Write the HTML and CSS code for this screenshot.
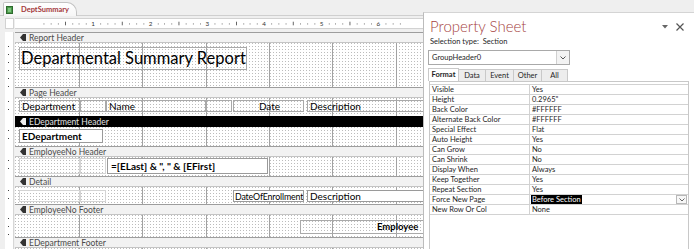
FILE: index.html
```html
<!DOCTYPE html>
<html>
<head>
<meta charset="utf-8">
<title>DeptSummary</title>
<link rel="stylesheet" href="styles.css">
</head>
<body>
<div class="app">
  <div class="designer">
    <div class="tabbar">
      <div class="tab">
        <svg class="ticon" width="7" height="8" viewBox="0 0 7 8"><rect x="0.5" y="0.5" width="6" height="7" fill="#4c9a4c" stroke="#2d6b2d"/><rect x="2" y="2" width="3" height="4" fill="#7cc47c"/></svg>
        <span>DeptSummary</span>
      </div>
    </div>
    <div class="rulerrow">
      <div class="corner"></div>
      <svg class="hruler" width="408" height="10" viewBox="0 0 408 10">
        <g fill="#555">
          <rect x="9" y="5" width="1" height="1"/><rect x="17" y="5" width="1" height="1"/><rect x="25" y="5" width="1" height="1"/><rect x="33" y="3" width="1" height="4"/><rect x="41" y="5" width="1" height="1"/><rect x="48" y="5" width="1" height="1"/><rect x="56" y="5" width="1" height="1"/>
          <rect x="72" y="5" width="1" height="1"/><rect x="80" y="5" width="1" height="1"/><rect x="88" y="5" width="1" height="1"/><rect x="96" y="3" width="1" height="4"/><rect x="104" y="5" width="1" height="1"/><rect x="112" y="5" width="1" height="1"/><rect x="120" y="5" width="1" height="1"/>
          <rect x="136" y="5" width="1" height="1"/><rect x="143" y="5" width="1" height="1"/><rect x="151" y="5" width="1" height="1"/><rect x="159" y="3" width="1" height="4"/><rect x="167" y="5" width="1" height="1"/><rect x="175" y="5" width="1" height="1"/><rect x="183" y="5" width="1" height="1"/>
          <rect x="199" y="5" width="1" height="1"/><rect x="207" y="5" width="1" height="1"/><rect x="215" y="5" width="1" height="1"/><rect x="223" y="3" width="1" height="4"/><rect x="231" y="5" width="1" height="1"/><rect x="238" y="5" width="1" height="1"/><rect x="246" y="5" width="1" height="1"/>
          <rect x="262" y="5" width="1" height="1"/><rect x="270" y="5" width="1" height="1"/><rect x="278" y="5" width="1" height="1"/><rect x="286" y="3" width="1" height="4"/><rect x="294" y="5" width="1" height="1"/><rect x="302" y="5" width="1" height="1"/><rect x="310" y="5" width="1" height="1"/>
          <rect x="326" y="5" width="1" height="1"/><rect x="333" y="5" width="1" height="1"/><rect x="341" y="5" width="1" height="1"/><rect x="349" y="3" width="1" height="4"/><rect x="357" y="5" width="1" height="1"/><rect x="365" y="5" width="1" height="1"/><rect x="373" y="5" width="1" height="1"/>
          <rect x="389" y="5" width="1" height="1"/><rect x="397" y="5" width="1" height="1"/><rect x="405" y="5" width="1" height="1"/>
        </g>
        <g class="rnum" fill="#333" text-anchor="middle">
          <text x="64" y="8">1</text><text x="128" y="8">2</text><text x="191" y="8">3</text><text x="254" y="8">4</text><text x="318" y="8">5</text><text x="381" y="8">6</text>
        </g>
      </svg>
    </div>

    <div class="sec"><div class="vr"></div><div class="bar"><svg class="arr" width="6" height="7" viewBox="0 0 6 7"><polygon points="0,3.5 3,0 6,0 6,7 3,7"/></svg>Report Header</div></div>
    <div class="sec"><div class="vr dots"></div><div class="body h-rh">
      <div class="ctl lbl title">Departmental Summary Report</div>
    </div></div>

    <div class="sec"><div class="vr"></div><div class="bar"><svg class="arr" width="6" height="7" viewBox="0 0 6 7"><polygon points="0,3.5 3,0 6,0 6,7 3,7"/></svg>Page Header</div></div>
    <div class="sec"><div class="vr dots"></div><div class="body h-ph">
      <div class="ctl lbl ph c-dept">Department</div>
      <div class="ctl lbl ph c-b1"></div>
      <div class="ctl lbl ph c-name">Name</div>
      <div class="ctl lbl ph c-b2"></div>
      <div class="ctl lbl ph c-date">Date</div>
      <div class="ctl lbl ph c-desc">Description</div>
    </div></div>

    <div class="sec"><div class="vr"></div><div class="bar dark"><svg class="arr" width="6" height="7" viewBox="0 0 6 7"><polygon points="0,3.5 3,0 6,0 6,7 3,7"/></svg>EDepartment Header</div></div>
    <div class="sec"><div class="vr dots"></div><div class="body h-edh">
      <div class="ctl txt bold c-edept">EDepartment</div>
    </div></div>

    <div class="sec"><div class="vr"></div><div class="bar"><svg class="arr" width="6" height="7" viewBox="0 0 6 7"><polygon points="0,3.5 3,0 6,0 6,7 3,7"/></svg>EmployeeNo Header</div></div>
    <div class="sec"><div class="vr dots"></div><div class="body h-enh">
      <div class="ctl faint en c-f1"></div>
      <div class="ctl faint en c-f2"></div>
      <div class="ctl txt bold c-elast">=[ELast] &amp; ", " &amp; [EFirst]</div>
    </div></div>

    <div class="sec"><div class="vr"></div><div class="bar"><svg class="arr" width="6" height="7" viewBox="0 0 6 7"><polygon points="0,3.5 3,0 6,0 6,7 3,7"/></svg>Detail</div></div>
    <div class="sec"><div class="vr dots"></div><div class="body h-det">
      <div class="ctl faint dt c-f1"></div>
      <div class="ctl faint dt c-f2"></div>
      <div class="ctl txt dt c-doe">DateOfEnrollment</div>
      <div class="ctl txt dt c-desc">Description</div>
    </div></div>

    <div class="sec"><div class="vr"></div><div class="bar"><svg class="arr" width="6" height="7" viewBox="0 0 6 7"><polygon points="0,3.5 3,0 6,0 6,7 3,7"/></svg>EmployeeNo Footer</div></div>
    <div class="sec"><div class="vr dots"></div><div class="body h-enf">
      <div class="ctl lbl bold c-emp">Employee</div>
    </div></div>

    <div class="sec"><div class="vr"></div><div class="bar"><svg class="arr" width="6" height="7" viewBox="0 0 6 7"><polygon points="0,3.5 3,0 6,0 6,7 3,7"/></svg>EDepartment Footer</div></div>
    <div class="sec grow"><div class="vr dots"></div><div class="body"></div></div>
  </div>

  <div class="props">
    <div class="ptitle">
      <span class="ptext">Property Sheet</span>
      <span class="pctl">
        <svg width="6" height="4" viewBox="0 0 6 4"><polygon points="0,0 6,0 3,3.5" fill="#666"/></svg>
        <svg width="8" height="8" viewBox="0 0 8 8"><path d="M0.5 0.5 L7.5 7.5 M7.5 0.5 L0.5 7.5" stroke="#555" stroke-width="1.2"/></svg>
      </span>
    </div>
    <div class="seltype">Selection type:&nbsp; Section</div>
    <div class="combo">
      <span class="cval">GroupHeader0</span>
      <span class="cbtn"><svg width="6" height="4" viewBox="0 0 6 4"><polyline points="0.5,0.5 3,3 5.5,0.5" fill="none" stroke="#555" stroke-width="1"/></svg></span>
    </div>
    <div class="ptabs">
      <span class="ptab active">Format</span>
      <span class="ptab">Data</span>
      <span class="ptab">Event</span>
      <span class="ptab">Other</span>
      <span class="ptab">All</span>
    </div>
    <div class="pane">
      <div class="rows">
        <div class="row"><span class="k">Visible</span><span class="v">Yes</span></div>
        <div class="row"><span class="k">Height</span><span class="v">0.2965"</span></div>
        <div class="row"><span class="k">Back Color</span><span class="v">#FFFFFF</span></div>
        <div class="row"><span class="k">Alternate Back Color</span><span class="v">#FFFFFF</span></div>
        <div class="row"><span class="k">Special Effect</span><span class="v">Flat</span></div>
        <div class="row"><span class="k">Auto Height</span><span class="v">Yes</span></div>
        <div class="row"><span class="k">Can Grow</span><span class="v">No</span></div>
        <div class="row"><span class="k">Can Shrink</span><span class="v">No</span></div>
        <div class="row"><span class="k">Display When</span><span class="v">Always</span></div>
        <div class="row"><span class="k">Keep Together</span><span class="v">Yes</span></div>
        <div class="row"><span class="k">Repeat Section</span><span class="v">Yes</span></div>
        <div class="row"><span class="k">Force New Page</span><span class="v sel"><span class="hl">Before Section</span><span class="dd"><svg width="6" height="4" viewBox="0 0 6 4"><polyline points="0.5,0.5 3,3 5.5,0.5" fill="none" stroke="#666" stroke-width="1"/></svg></span></span></div>
        <div class="row"><span class="k">New Row Or Col</span><span class="v">None</span></div>
      </div>
    </div>
  </div>
</div>
</body>
</html>
```

FILE: styles.css
```css
* { box-sizing: border-box; }
html, body { margin: 0; padding: 0; }
body {
  width: 694px;
  height: 249px;
  overflow: hidden;
  background: #efefef;
  font-family: Lato, "Open Sans", sans-serif;
  color: #000;
}
.app { display: flex; height: 249px; }

/* ---------- designer ---------- */
.designer {
  width: 423px;
  flex: none;
  display: flex;
  flex-direction: column;
  overflow: hidden;
}
.tabbar {
  height: 16px;
  padding: 2px 0 0 3px;
  display: flex;
  border-bottom: 1px solid #cfcfcf;
}
.tab {
  width: 74px;
  height: 14px;
  background: linear-gradient(#ffffff, #f6f6f6);
  border: 1px solid #c3c3c3;
  border-bottom: none;
  border-radius: 2px 10px 0 0;
  display: flex;
  align-items: center;
  padding-left: 2px;
  gap: 8px;
  font-size: 7.5px;
  font-weight: bold;
  color: #a4373a;
}
.ticon { display: block; flex: none; }

.rulerrow {
  height: 16px;
  display: flex;
  padding: 2px 0 0 5px;
}
.corner {
  width: 9px;
  height: 11px;
  background: #fff;
  border: 1px solid #d2d2d2;
}
.hruler {
  display: block;
  margin-left: 1px;
  width: 408px;
  height: 11px;
  background: #fff;
  border-top: 1px solid #d2d2d2;
  border-bottom: 1px solid #d2d2d2;
}
.rnum text { font-family: Lato, sans-serif; font-size: 7px; }

.sec { display: flex; flex: none; }
.sec.grow { flex: 1; }
.vr {
  width: 9px;
  margin-left: 5px;
  margin-right: 1px;
  flex: none;
  background: #fff;
  border-right: 1px solid #d6d6d6;
}
.vr.dots {
  background:
    linear-gradient(90deg, #fff 3px, transparent 3px, transparent 4px, #fff 4px) 0 0 / 9px 8px,
    linear-gradient(#fff 3px, transparent 3px, transparent 4px, #fff 4px) 0 0 / 9px 8px,
    #444;
}
.bar {
  flex: 1;
  height: 11px;
  background: #f2f2f2;
  border-top: 1px solid #9d9d9d;
  border-bottom: 1px solid #c4c4c4;
  display: flex;
  align-items: center;
  padding-left: 5px;
  gap: 3px;
  font-size: 8.5px;
  color: #4a4a4a;
  white-space: nowrap;
}
.bar .arr { display: block; fill: #333; flex: none; }
.bar.dark { background: #000; color: #e2e2e2; border-top-color: #000; border-bottom-color: #000; }
.bar.dark .arr { fill: #eee; }

.body {
  flex: 1;
  position: relative;
  overflow: hidden;
  background:
    linear-gradient(#a2a2a2, #a2a2a2) 64px 0 / 1px 100% no-repeat,
    linear-gradient(#a2a2a2, #a2a2a2) 127px 0 / 1px 100% no-repeat,
    linear-gradient(#a2a2a2, #a2a2a2) 191px 0 / 1px 100% no-repeat,
    linear-gradient(#a2a2a2, #a2a2a2) 254px 0 / 1px 100% no-repeat,
    linear-gradient(#a2a2a2, #a2a2a2) 317px 0 / 1px 100% no-repeat,
    linear-gradient(#a2a2a2, #a2a2a2) 381px 0 / 1px 100% no-repeat,
    linear-gradient(90deg, transparent 1px, #fff 1px) 0 0 / 3px 3px,
    linear-gradient(transparent 1px, #fff 1px) 0 0 / 3px 3px,
    #bcbcbc;
}
.h-rh { height: 44px; }
.h-ph { height: 18px; }
.h-edh { height: 19px; }
.h-enh { height: 19px; }
.h-det { height: 17px; }
.h-enf { height: 22px; }

.ctl {
  position: absolute;
  font-size: 10px;
  line-height: 11px;
  white-space: nowrap;
  overflow: hidden;
  padding-left: 2px;
}
.lbl { border: 1px solid #a9a9a9; background: transparent; }
.txt { border: 1px solid #9a9a9a; background: #fff; }
.faint { border: 1px solid #d4d4d4; }
.bold { font-weight: bold; }

.title {
  left: 4px; top: 4px; width: 228px; height: 23px;
  font-size: 16.5px; line-height: 21px;
  padding-left: 1px;
}
.ph { top: 2px; height: 12px; }
.c-dept { left: 4px; width: 61px; }
.c-b1 { left: 65px; width: 26px; }
.c-name { left: 91px; width: 100px; }
.c-b2 { left: 191px; width: 26px; }
.c-date { left: 218px; width: 71px; text-align: center; }
.c-desc { left: 292px; width: 130px; }

.c-edept { left: 4px; top: 2px; width: 84px; height: 14px; line-height: 12px; }
.en { top: 1px; height: 16px; }
.c-f1 { left: 4px; width: 61px; }
.c-f2 { left: 65px; width: 26px; }
.c-elast { left: 92px; top: 1px; width: 161px; height: 16px; line-height: 14px; padding-left: 3px; }

.dt { top: 3px; height: 12px; }
.c-doe { left: 218px; width: 71px; padding-left: 1px; font-size: 8.8px; letter-spacing: -0.15px; }

.c-emp { left: 285px; top: 5px; width: 140px; height: 14px; line-height: 12px; padding-left: 76px; font-size: 9.5px; }

/* ---------- property sheet ---------- */
.props {
  flex: 1;
  margin-top: 12px;
  background: #fff;
  border-left: 1px solid #bcbcbc;
  border-top: 1px solid #d4d4d4;
  padding: 3px 0 0 4px;
  display: flex;
  flex-direction: column;
  font-size: 7.5px;
  color: #1e1e1e;
}
.ptitle {
  height: 20px;
  display: flex;
  align-items: center;
  justify-content: space-between;
  padding-left: 2px;
}
.ptext {
  font-size: 15px;
  font-weight: 300;
  line-height: 20px;
  color: #a53f40;
}
.pctl {
  display: flex;
  align-items: center;
  gap: 8px;
  padding-right: 10px;
  margin-top: 2px;
}
.pctl svg { display: block; }
.seltype {
  margin-top: 1px;
  height: 10px;
  line-height: 10px;
  padding-left: 2px;
  font-size: 7.5px;
}
.combo {
  margin-top: 3px;
  width: 142px;
  height: 15px;
  border: 1px solid #a9a9a9;
  display: flex;
  align-items: center;
  justify-content: space-between;
  font-size: 7.5px;
}
.cval { padding-left: 3px; }
.cbtn {
  width: 13px;
  height: 13px;
  border-left: 1px solid #d0d0d0;
  background: #f3f3f3;
  display: flex;
  align-items: center;
  justify-content: center;
}
.ptabs {
  margin-top: 3px;
  height: 13px;
  display: flex;
  align-items: flex-end;
}
.ptab {
  height: 12px;
  line-height: 11px;
  border: 1px solid #c9c9c9;
  border-bottom: none;
  margin-right: -1px;
  background: #ededed;
  font-size: 7.5px;
  text-align: center;
}
.ptab:nth-child(1) { width: 31px; }
.ptab:nth-child(2) { width: 28px; }
.ptab:nth-child(3) { width: 29px; }
.ptab:nth-child(4) { width: 29px; }
.ptab:nth-child(5) { width: 27px; }
.ptab.active {
  height: 13px;
  background: #fff;
  font-weight: bold;
  line-height: 12px;
}
.pane {
  flex: 1;
  margin-left: 1px;
  width: 260px;
  border: 1px solid #c8c8c8;
  border-bottom: none;
  padding-top: 2px;
}
.rows { border-top: 1px solid #d2d2d2; }
.row {
  display: flex;
  height: 10px;
  border-bottom: 1px solid #d2d2d2;
  line-height: 9px;
  font-size: 7.5px;
}
.k {
  width: 100px;
  flex: none;
  padding-left: 2px;
  border-right: 1px solid #d2d2d2;
  white-space: nowrap;
}
.v { flex: 1; padding-left: 2px; white-space: nowrap; }
.v.sel { display: flex; justify-content: space-between; padding-left: 1px; }
.hl { background: #000; color: #fff; padding: 0 1px; }
.dd {
  width: 11px;
  height: 9px;
  border: 1px solid #b8b8b8;
  margin-right: 1px;
  display: flex;
  align-items: center;
  justify-content: center;
  background: #f7f7f7;
}
.dd svg { display: block; }
```
